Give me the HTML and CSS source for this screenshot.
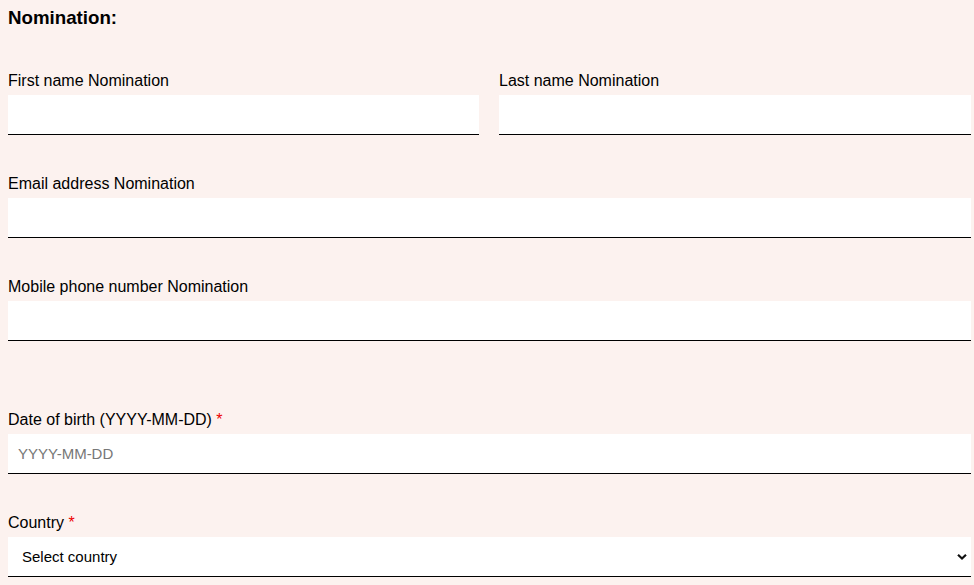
FILE: index.html
```html
<!DOCTYPE html>
<html lang="en">
<head>
<meta charset="UTF-8">
<meta name="viewport" content="width=device-width, initial-scale=1.0">
<title>Nomination</title>
<link rel="stylesheet" href="styles.css">
</head>
<body>

<form class="form">
  <h3 class="form-title">Nomination:</h3>

  <div class="row-2">
    <div class="field">
      <label class="field-label" for="fn">First name Nomination</label>
      <input class="field-input" id="fn" type="text">
    </div>
    <div class="field">
      <label class="field-label" for="ln">Last name Nomination</label>
      <input class="field-input" id="ln" type="text">
    </div>
  </div>

  <div class="field">
    <label class="field-label" for="em">Email address Nomination</label>
    <input class="field-input" id="em" type="email">
  </div>

  <div class="field field-gap">
    <label class="field-label" for="ph">Mobile phone number Nomination</label>
    <input class="field-input" id="ph" type="tel">
  </div>

  <div class="field">
    <label class="field-label" for="dob">Date of birth (YYYY-MM-DD) <span class="req">*</span></label>
    <input class="field-input" id="dob" type="text" placeholder="YYYY-MM-DD">
  </div>

  <div class="field">
    <label class="field-label" for="co">Country <span class="req">*</span></label>
    <div class="select-wrap">
      <select class="field-select" id="co">
        <option>Select country</option>
        <option>Netherlands</option>
        <option>Belgium</option>
        <option>Germany</option>
      </select>
      <svg class="select-arrow" width="10" height="7" viewBox="0 0 10 7"><path d="M1 1.2l4 3.8 4-3.8" fill="none" stroke="#111" stroke-width="2.2"/></svg>
    </div>
  </div>
</form>

</body>
</html>
```

FILE: styles.css
```css
*, *::before, *::after { box-sizing: border-box; }
body {
  margin: 0;
  background: #fcf2ef;
  font-family: 'Liberation Sans', Arial, sans-serif;
  color: #000;
}
.form { padding: 7px 3px 0 8px; }
.form-title {
  margin: 0 0 43px;
  font-size: 18.72px;
  line-height: 22px;
  font-weight: 700;
}

.row-2 {
  display: grid;
  grid-template-columns: 471px 1fr;
  gap: 20px;
}

.field { margin-bottom: 40px; }
.field-gap { margin-bottom: 70px; }
.field-label {
  display: block;
  font-size: 16px;
  line-height: 18px;
  margin-bottom: 5px;
}
.req { color: #e00; }

.field-input,
.field-select {
  display: block;
  width: 100%;
  height: 40px;
  background: #fff;
  border: none;
  border-bottom: 1px solid #000;
  border-radius: 0;
  font-family: inherit;
  font-size: 15px;
  color: #000;
  outline: none;
}
.field-input { padding: 0 10px; }
.field-input::placeholder { color: #777; }

.select-wrap { position: relative; }
.field-select {
  appearance: none;
  -webkit-appearance: none;
  padding: 0 30px 0 14px;
}
.select-arrow {
  position: absolute;
  right: 4px;
  top: 50%;
  transform: translateY(-50%);
  pointer-events: none;
}
```
